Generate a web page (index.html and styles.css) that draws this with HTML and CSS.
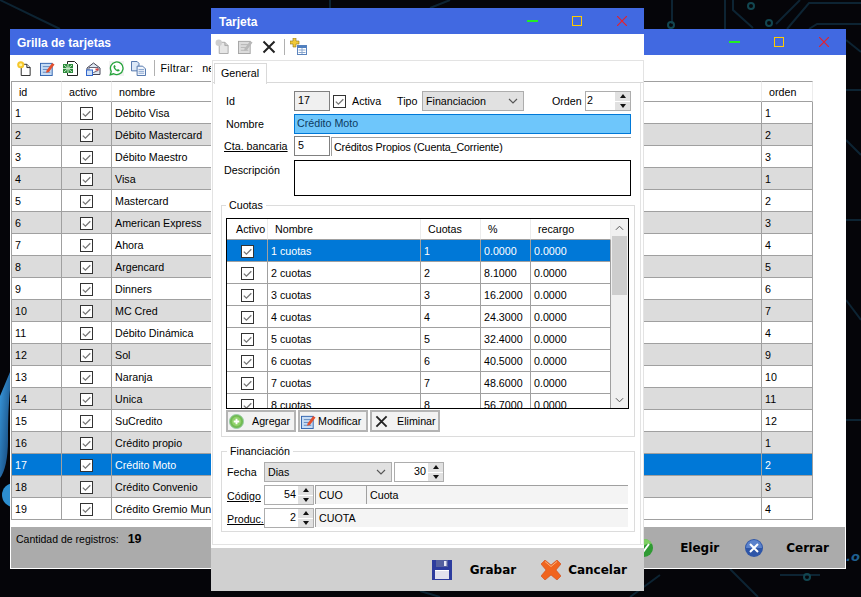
FILE: index.html
```html
<!DOCTYPE html>
<html lang="es">
<head>
    <meta charset="UTF-8">
    <title>Tarjetas</title>
    <link rel="stylesheet" href="styles.css">
</head>
<body>
    <!-- icon sheet -->
    <svg class="sheet" width="0" height="0">
        <defs>
            <linearGradient id="blob" x1="0" y1="0" x2="1" y2="1"><stop offset="0" stop-color="#3a9be0"/><stop offset="1" stop-color="#123f70"/></linearGradient>
        </defs>
        <symbol id="i-check" viewBox="0 0 13 13"><rect x=".5" y=".5" width="12" height="12" fill="#fff" stroke="#333"/><path d="M2.8 6.600l2.600 2.600 4.900-5" fill="none" stroke="#777" stroke-width="1.300"/></symbol>
        <symbol id="i-new" viewBox="0 0 16 16"><path d="M4.500 3.500h6l3.500 3.500v8.500H4.500z" fill="#fff" stroke="#222"/><path d="M10.500 3.500V7H14" fill="#ddd" stroke="#222"/><circle cx="4" cy="4" r="3.800" fill="#f6c72c"/><circle cx="4" cy="4" r="1.700" fill="#fff3a0"/></symbol>
        <symbol id="i-new-off" viewBox="0 0 16 16"><path d="M4.500 3.500h6l3.500 3.500v8.500H4.500z" fill="#e6e6e6" stroke="#a8a8a8"/><path d="M10.500 3.500V7H14" fill="#ccc" stroke="#a8a8a8"/><circle cx="4" cy="4" r="3.400" fill="#cfcfcf"/></symbol>
        <symbol id="i-edit" viewBox="0 0 16 16"><rect x=".5" y="2.500" width="12.500" height="13" fill="#c6dcf5" stroke="#2f62ae"/><path d="M3 6h8M3 9h6M3 12h8" stroke="#5f86bd"/><path d="M7 10l6-8 2.500 1.800-6 8-3 .7z" fill="#e2502e"/></symbol>
        <symbol id="i-edit-off" viewBox="0 0 16 16"><rect x=".5" y="2.500" width="12.500" height="13" fill="#dcdcdc" stroke="#a4a4a4"/><path d="M3 6h8M3 9h6M3 12h8" stroke="#b4b4b4"/><path d="M7 10l6-8 2.500 1.800-6 8-3 .7z" fill="#b8b8b8"/></symbol>
        <symbol id="i-excel" viewBox="0 0 17 17"><path d="M5.500 1.500h7l3 3v11h-10z" fill="#fff" stroke="#222"/><path d="M1 4h10v9H1z" fill="#2a8a3a"/><path d="M2 5l8 7M10 5l-8 7M1 8.500h10M6 4v9" stroke="#c8e8c8"/></symbol>
        <symbol id="i-mail" viewBox="0 0 15 15"><path d="M1 7l6.500-5L14 7v6.500H1z" fill="#dfe8f2" stroke="#445"/><path d="M3 6.500h9v3l-4.500 2-4.500-2z" fill="#fff" stroke="#667"/><rect x="9.500" y="7.500" width="3" height="2" fill="#d44"/><rect x=".5" y="9" width="6" height="5.500" fill="#cfe0f5" stroke="#36c"/></symbol>
        <symbol id="i-whatsapp" viewBox="0 0 16 16"><rect width="16" height="16" fill="#f2f2f2"/><path d="M1.400 14.600l1-3.600A6.700 6.700 0 1 1 5 13.600z" fill="#fff" stroke="#25a33a" stroke-width="1.400"/><path d="M5.300 4.800c-.9.8-.6 2.400.7 4 1.400 1.700 3.100 2.700 4.300 2.200.8-.3 1.200-1 1-1.500l-1.800-1-.8.800c-.9-.4-1.800-1.300-2.300-2.400l.7-.8-.8-1.900c-.4-.1-.7.2-1 .6z" fill="#25a33a"/></symbol>
        <symbol id="i-copy" viewBox="0 0 16 16"><path d="M.5 .5h6l2 2v8h-8z" fill="#dce8f7" stroke="#4a6fa8"/><path d="M6.500 5.500h6l3 3v7h-9z" fill="#f3f7fd" stroke="#4a6fa8"/><path d="M8 9h6M8 11h6M8 13h6" stroke="#7f9fcc"/></symbol>
        <symbol id="i-x" viewBox="0 0 14 14"><path d="M1.500 1.500l11 11M12.500 1.500l-11 11" stroke="#222" stroke-width="2" fill="none"/></symbol>
        <symbol id="i-addtable" viewBox="0 0 17 17"><path d="M3 0h3v3h3v3H6v3H3V6H0V3h3z" fill="#f0c93a" stroke="#8a7420" stroke-width=".6"/><rect x="7.500" y="7.500" width="9" height="9" fill="#fff" stroke="#5b84bd"/><rect x="7.500" y="7.500" width="9" height="2.500" fill="#4f7fc0"/><path d="M8.500 12h7M8.500 14.500h7M12 10v6" stroke="#8aa7cf"/></symbol>
        <symbol id="i-plus" viewBox="0 0 16 16"><circle cx="8" cy="8" r="7.500" fill="#72bb53" stroke="#9ca"/><circle cx="8" cy="8" r="5" fill="#8fd16a"/><path d="M5 8h6M8 5v6" stroke="#fff" stroke-width="2"/></symbol>
        <symbol id="i-floppy" viewBox="0 0 20 20"><path d="M0 0h20v20H0z" fill="#2d3c9e"/><rect x="4" y="0" width="12" height="7" fill="#55609f"/><rect x="12" y="1" width="2.500" height="5" fill="#e8e8f4"/><rect x="3" y="10" width="14" height="9" fill="#e2e2ee"/><path d="M3 10.500h14" stroke="#fff"/></symbol>
        <symbol id="i-cancel" viewBox="0 0 20 20"><path d="M4 0l6 5 6-5 4 4-5 6 5 6-4 4-6-5-6 5-4-4 5-6-5-6z" fill="#f0641e" stroke="#d24a16" stroke-width=".6"/><path d="M4 1.500l6 5 6-5" fill="none" stroke="#fbb27a"/></symbol>
        <symbol id="i-ok" viewBox="0 0 18 18"><circle cx="9" cy="9" r="9" fill="#2f9a33"/><path d="M0 9a9 9 0 0 1 9-9 9 9 0 0 1 8 5C12 4 6 7 2 15a9 9 0 0 1-2-6z" fill="#7ccf62"/><path d="M5 9l3 4 6-8" fill="none" stroke="#fff" stroke-width="2"/></symbol>
        <symbol id="i-close" viewBox="0 0 18 18"><circle cx="9" cy="9" r="9" fill="#2d55a8"/><path d="M1 9a8 8 0 0 1 16 0z" fill="#5b82cb"/><path d="M5 5l8 8M13 5l-8 8" stroke="#fff" stroke-width="2"/></symbol>
    </svg>

    <!-- wallpaper -->
    <svg class="wallpaper" viewBox="0 0 861 597">
        <g fill="none" stroke="#0d2433" stroke-width="2">
            <path d="M672 0v24M725 0v29M733 0v10l20 18M800 0l-24 24M861 3h-52l-22 26M861 24h-44l-8 5"/>
            <path d="M0 0l60 29M330 0v8M450 0l-20 8M846 40l15 12M846 90h15M846 140l15 15M846 220h15M846 300l15 20M846 420h15"/>
            <path d="M730 569l28 28M660 575l-30 22M780 575h40M420 591l20 6"/>
        </g>
        <g fill="none" stroke="#124650" stroke-width="2">
            <circle cx="671" cy="25" r="3"/><circle cx="751" cy="6" r="3"/><circle cx="769" cy="23" r="3"/><circle cx="807" cy="577" r="3"/>
        </g>
        <path d="M10 372L0 396v82c5-6 8-20 8-38 0-24 1-40 2-50z" fill="url(#blob)"/>
        <circle cx="14" cy="495" r="12" fill="#2d8fd0"/>
        <text x="846" y="561" class="wallpaper-text">.o</text>
    </svg>

    <section class="window window-list">
        <header class="titlebar">
            <h1 class="title">Grilla de tarjetas</h1>
            <div class="title-btns">
                <span class="btn-min"></span><span class="btn-max"></span>
                <svg class="btn-close" viewBox="0 0 10 10"><path d="M0 0l10 10M10 0L0 10"/></svg>
            </div>
        </header>
        <div class="toolbar list-toolbar">
            <svg class="ico ico-new"><use href="#i-new"/></svg>
            <svg class="ico"><use href="#i-edit"/></svg>
            <svg class="ico ico-lg"><use href="#i-excel"/></svg>
            <svg class="ico"><use href="#i-mail"/></svg>
            <svg class="ico"><use href="#i-whatsapp"/></svg>
            <svg class="ico"><use href="#i-copy"/></svg>
            <span class="sep"></span>
            <span class="filter">Filtrar:</span>
            <span class="filter-value">ne</span>
        </div>
        <table class="grid list-grid">
            <colgroup><col class="c-id"><col class="c-act"><col class="c-name"><col class="c-ord"></colgroup>
            <thead><tr><th>id</th><th>activo</th><th>nombre</th><th>orden</th></tr></thead>
            <tbody>
                <tr><td>1</td><td class="chk"><svg><use href="#i-check"/></svg></td><td>Débito Visa</td><td>1</td></tr>
                <tr class="alt"><td>2</td><td class="chk"><svg><use href="#i-check"/></svg></td><td>Débito Mastercard</td><td>2</td></tr>
                <tr><td>3</td><td class="chk"><svg><use href="#i-check"/></svg></td><td>Débito Maestro</td><td>3</td></tr>
                <tr class="alt"><td>4</td><td class="chk"><svg><use href="#i-check"/></svg></td><td>Visa</td><td>1</td></tr>
                <tr><td>5</td><td class="chk"><svg><use href="#i-check"/></svg></td><td>Mastercard</td><td>2</td></tr>
                <tr class="alt"><td>6</td><td class="chk"><svg><use href="#i-check"/></svg></td><td>American Express</td><td>3</td></tr>
                <tr><td>7</td><td class="chk"><svg><use href="#i-check"/></svg></td><td>Ahora</td><td>4</td></tr>
                <tr class="alt"><td>8</td><td class="chk"><svg><use href="#i-check"/></svg></td><td>Argencard</td><td>5</td></tr>
                <tr><td>9</td><td class="chk"><svg><use href="#i-check"/></svg></td><td>Dinners</td><td>6</td></tr>
                <tr class="alt"><td>10</td><td class="chk"><svg><use href="#i-check"/></svg></td><td>MC Cred</td><td>7</td></tr>
                <tr><td>11</td><td class="chk"><svg><use href="#i-check"/></svg></td><td>Débito Dinámica</td><td>4</td></tr>
                <tr class="alt"><td>12</td><td class="chk"><svg><use href="#i-check"/></svg></td><td>Sol</td><td>9</td></tr>
                <tr><td>13</td><td class="chk"><svg><use href="#i-check"/></svg></td><td>Naranja</td><td>10</td></tr>
                <tr class="alt"><td>14</td><td class="chk"><svg><use href="#i-check"/></svg></td><td>Unica</td><td>11</td></tr>
                <tr><td>15</td><td class="chk"><svg><use href="#i-check"/></svg></td><td>SuCredito</td><td>12</td></tr>
                <tr class="alt"><td>16</td><td class="chk"><svg><use href="#i-check"/></svg></td><td>Crédito propio</td><td>1</td></tr>
                <tr class="selected"><td>17</td><td class="chk"><svg><use href="#i-check"/></svg></td><td>Crédito Moto</td><td>2</td></tr>
                <tr class="alt"><td>18</td><td class="chk"><svg><use href="#i-check"/></svg></td><td>Crédito Convenio</td><td>3</td></tr>
                <tr><td>19</td><td class="chk"><svg><use href="#i-check"/></svg></td><td>Crédito Gremio Municipal</td><td>4</td></tr>
            </tbody>
        </table>
        <footer class="list-footer">
            <span class="count">Cantidad de registros: <b>19</b></span>
            <svg class="foot-ico ok-ico"><use href="#i-ok"/></svg>
            <span class="foot-btn elegir">Elegir</span>
            <svg class="foot-ico close-ico"><use href="#i-close"/></svg>
            <span class="foot-btn cerrar">Cerrar</span>
        </footer>
    </section>

    <section class="window window-card">
        <header class="titlebar">
            <h1 class="title">Tarjeta</h1>
            <div class="title-btns">
                <span class="btn-min"></span><span class="btn-max"></span>
                <svg class="btn-close" viewBox="0 0 10 10"><path d="M0 0l10 10M10 0L0 10"/></svg>
            </div>
        </header>
        <div class="toolbar card-toolbar">
            <svg class="ico"><use href="#i-new-off"/></svg>
            <svg class="ico"><use href="#i-edit-off"/></svg>
            <svg class="ico ico-x"><use href="#i-x"/></svg>
            <span class="sep"></span>
            <svg class="ico ico-lg"><use href="#i-addtable"/></svg>
        </div>

        <div class="tabs">
            <div class="tab-strip"><span class="tab">General</span></div>
            <div class="pane">
                <div class="row row-first">
                    <label class="lbl lbl-id">Id</label>
                    <span class="field field-num readonly">17</span>
                    <svg class="check-box"><use href="#i-check"/></svg>
                    <span class="activa">Activa</span>
                    <span class="tipo">Tipo</span>
                    <span class="select select-tipo">Financiacion<svg viewBox="0 0 10 6"><path d="M1 1l4 4 4-4"/></svg></span>
                    <span class="orden">Orden</span>
                    <span class="spin spin-orden"><span class="spin-val left">2</span><span class="spin-btns"><i class="up"></i><i class="down"></i></span></span>
                </div>
                <div class="row row-name">
                    <label class="lbl lbl-name">Nombre</label>
                    <span class="field field-wide focus">Crédito Moto</span>
                </div>
                <div class="row row-bank">
                    <label class="lbl link">Cta. bancaria</label>
                    <span class="field field-num">5</span>
                    <span class="display display-bank">Créditos Propios (Cuenta_Corriente)</span>
                </div>
                <div class="row row-desc">
                    <label class="lbl">Descripción</label>
                    <span class="field field-wide textarea"></span>
                </div>

                <fieldset class="group group-cuotas">
                    <legend>Cuotas</legend>
                    <div class="sub-grid">
                        <div class="sub-scroll">
                            <table class="grid">
                                <colgroup><col class="s-act"><col class="s-name"><col class="s-cuo"><col class="s-pct"><col class="s-rec"></colgroup>
                                <thead><tr><th class="th-act">Activo</th><th>Nombre</th><th>Cuotas</th><th>%</th><th>recargo</th></tr></thead>
                                <tbody>
                                    <tr class="selected"><td class="chk"><svg><use href="#i-check"/></svg></td><td>1 cuotas</td><td>1</td><td>0.0000</td><td>0.0000</td></tr>
                                    <tr><td class="chk"><svg><use href="#i-check"/></svg></td><td>2 cuotas</td><td>2</td><td>8.1000</td><td>0.0000</td></tr>
                                    <tr><td class="chk"><svg><use href="#i-check"/></svg></td><td>3 cuotas</td><td>3</td><td>16.2000</td><td>0.0000</td></tr>
                                    <tr><td class="chk"><svg><use href="#i-check"/></svg></td><td>4 cuotas</td><td>4</td><td>24.3000</td><td>0.0000</td></tr>
                                    <tr><td class="chk"><svg><use href="#i-check"/></svg></td><td>5 cuotas</td><td>5</td><td>32.4000</td><td>0.0000</td></tr>
                                    <tr><td class="chk"><svg><use href="#i-check"/></svg></td><td>6 cuotas</td><td>6</td><td>40.5000</td><td>0.0000</td></tr>
                                    <tr><td class="chk"><svg><use href="#i-check"/></svg></td><td>7 cuotas</td><td>7</td><td>48.6000</td><td>0.0000</td></tr>
                                    <tr><td class="chk"><svg><use href="#i-check"/></svg></td><td>8 cuotas</td><td>8</td><td>56.7000</td><td>0.0000</td></tr>
                                </tbody>
                            </table>
                        </div>
                        <div class="scrollbar">
                            <svg viewBox="0 0 10 6"><path d="M1 5l4-4 4 4"/></svg>
                            <span class="thumb"></span>
                            <svg viewBox="0 0 10 6"><path d="M1 1l4 4 4-4"/></svg>
                        </div>
                    </div>
                    <div class="actions">
                        <span class="action"><svg class="a-plus"><use href="#i-plus"/></svg>Agregar</span>
                        <span class="action"><svg class="a-edit"><use href="#i-edit"/></svg>Modificar</span>
                        <span class="action"><svg class="a-x"><use href="#i-x"/></svg>Eliminar</span>
                    </div>
                </fieldset>

                <fieldset class="group group-fin">
                    <legend>Financiación</legend>
                    <div class="fin-row">
                        <label class="lbl-fin">Fecha</label>
                        <span class="select select-fecha">Dias<svg viewBox="0 0 10 6"><path d="M1 1l4 4 4-4"/></svg></span>
                        <span class="spin spin-dias"><span class="spin-val">30</span><span class="spin-btns"><i class="up"></i><i class="down"></i></span></span>
                    </div>
                    <div class="fin-row">
                        <label class="lbl-fin link">Código</label>
                        <span class="spin"><span class="spin-val">54</span><span class="spin-btns"><i class="up"></i><i class="down"></i></span></span>
                        <span class="display display-code">CUO</span>
                        <span class="display display-grow">Cuota</span>
                    </div>
                    <div class="fin-row">
                        <label class="lbl-fin link">Produc.</label>
                        <span class="spin"><span class="spin-val">2</span><span class="spin-btns"><i class="up"></i><i class="down"></i></span></span>
                        <span class="display display-grow">CUOTA</span>
                    </div>
                </fieldset>
            </div>
        </div>

        <footer class="card-footer">
            <svg class="foot-ico"><use href="#i-floppy"/></svg>
            <span class="foot-btn grabar">Grabar</span>
            <svg class="foot-ico cancel-ico"><use href="#i-cancel"/></svg>
            <span class="foot-btn cancelar">Cancelar</span>
        </footer>
    </section>
</body>
</html>
```

FILE: styles.css
```css
* {
    box-sizing: border-box;
}
html, body {
    height: 100%;
}
body {
    margin: 0;
    background: #050509;
    overflow: hidden;
    font: 10.7px/14px "Liberation Sans", Arial, sans-serif;
    color: #000;
}
.sheet {
    position: absolute;
}
.wallpaper {
    position: absolute;
    left: 0;
    top: 0;
    width: 861px;
    height: 597px;
}
.wallpaper-text {
    fill: #1f5f8f;
    font: italic bold 13px "DejaVu Sans", sans-serif;
}

/* windows */
.window {
    position: absolute;
    display: flex;
    flex-direction: column;
    background: #fff;
}
.window-list {
    left: 10px;
    top: 29px;
    width: 836px;
    height: 540px;
}
.window-card {
    left: 211px;
    top: 8px;
    width: 433px;
    height: 583px;
}
.titlebar {
    flex: none;
    height: 26px;
    display: flex;
    align-items: center;
    background: #4169e1;
    color: #fff;
}
.title {
    margin: 2px 0 0 7px;
    font-size: 12px;
    font-weight: bold;
}
.window-card .title {
    margin-left: 8px;
}
.title-btns {
    margin-left: auto;
    display: flex;
    align-items: center;
    padding-right: 17px;
}
.btn-min {
    width: 11px;
    height: 2px;
    background: #22ee22;
}
.btn-max {
    width: 10px;
    height: 10px;
    margin-left: 34px;
    border: 1px solid #ffcc00;
}
.btn-close {
    width: 10px;
    height: 10px;
    margin-left: 35px;
}
.btn-close path {
    stroke: #e8202a;
    stroke-width: 1.2;
    fill: none;
}

/* toolbars */
.toolbar {
    flex: none;
    display: flex;
    align-items: center;
    background: #fff;
}
.list-toolbar {
    height: 26px;
    padding-left: 7px;
}
.card-toolbar {
    height: 25px;
    padding-left: 4px;
}
.ico {
    flex: none;
    width: 15px;
    height: 15px;
    margin-right: 7.5px;
}
.ico-lg {
    width: 17px;
    height: 17px;
    margin-right: 7px;
}
.ico-x {
    width: 14px;
    height: 14px;
    margin-left: 2px;
}
.sep {
    width: 1px;
    height: 16px;
    background: #b0b0b0;
}
.list-toolbar .sep {
    margin-right: 6px;
}
.card-toolbar .sep {
    margin-right: 5px;
}
.filter {
    letter-spacing: .3px;
}
.filter-value {
    margin-left: 9px;
}

/* grids */
.grid {
    table-layout: fixed;
    border-collapse: separate;
    border-spacing: 0;
}
.grid th {
    height: 21px;
    padding: 0 0 0 7px;
    font-weight: normal;
    text-align: left;
    border-right: 1px solid #ececec;
    border-bottom: 1px solid #a0a0a0;
}
.grid td {
    height: 22px;
    padding: 0 0 0 3px;
    white-space: nowrap;
    overflow: hidden;
    border-right: 1px solid #a0a0a0;
    border-bottom: 1px solid #a0a0a0;
}
.grid td.chk {
    padding: 0;
    text-align: center;
}
.chk svg {
    display: block;
    width: 13px;
    height: 13px;
    margin: 1px auto 0;
}
.alt td {
    background: #dcdcdc;
}
.selected td {
    background: #0078d7;
    color: #fff;
}
.list-grid {
    width: 802px;
    margin-left: 1px;
}
.list-grid thead th {
    border-top: 1px solid #a0a0a0;
    height: 21px;
}
.list-grid th:first-child,
.list-grid td:first-child {
    border-left: 1px solid #a0a0a0;
}
.c-id { width: 51px; }
.c-act { width: 50px; }
.c-name { width: 650px; }
.c-ord { width: 51px; }

.list-footer {
    margin: auto 0 0;
    height: 43px;
    display: flex;
    align-items: center;
    background: #ababab;
    border: 1px solid #fff;
    padding: 0 16px 0 5px;
}
.count {
    align-self: flex-start;
    margin-top: 5px;
    margin-right: auto;
    font-size: 10.5px;
}
.count b {
    margin-left: 6px;
    font-size: 12.5px;
}
.foot-ico {
    width: 18px;
    height: 18px;
    flex: none;
}
.foot-btn {
    font: bold 12px/16px "DejaVu Sans", sans-serif;
}
.elegir {
    margin-left: 27px;
}
.close-ico {
    margin-left: 26px;
}
.cerrar {
    margin-left: 23px;
}

/* card form */
.tabs {
    flex: 1;
    min-height: 0;
    margin: 1px 0 3px 1px;
    border: 1px solid #e3e3e3;
    display: flex;
    flex-direction: column;
}
.tab-strip {
    flex: none;
    height: 22px;
    padding: 2px 0 0 1px;
    border-bottom: 1px solid #d9d9d9;
}
.tab {
    display: block;
    width: 53px;
    height: 21px;
    padding: 2px 0 0 6px;
    border: 1px solid #d9d9d9;
    border-bottom: 0;
    background: #fff;
}
.pane {
    flex: 1;
    width: 428px;
    border-right: 1px solid #e3e3e3;
    padding-top: 8px;
}
.row {
    display: flex;
    height: 20px;
    align-items: center;
    padding-left: 11px;
}
.row-name {
    margin-top: 3px;
}
.row-bank {
    margin-top: 2px;
}
.row-desc {
    height: 36px;
    margin-top: 4px;
    align-items: flex-start;
}
.row-desc .lbl {
    margin-top: 3px;
}
.lbl {
    flex: none;
    width: 70px;
}
.lbl-id, .lbl-name {
    padding-left: 2px;
}
.link {
    text-decoration: underline;
}
.field {
    display: block;
    height: 20px;
    line-height: 17px;
    padding-left: 3px;
    border: 1px solid #808080;
    background: #fff;
}
.field-num {
    width: 36px;
}
.readonly {
    background: #f0f0f0;
}
.field-wide {
    width: 337px;
}
.focus {
    border-color: #0078d7;
    background: #6ec6fb;
    color: #0d3a5f;
    padding-left: 2px;
}
.textarea {
    height: 36px;
    border-color: #000;
}
.check-box {
    flex: none;
    width: 13px;
    height: 13px;
    margin-left: 3px;
}
.activa {
    margin-left: 6px;
    width: 45px;
}
.tipo {
    width: 25px;
}
.select {
    display: flex;
    align-items: center;
    justify-content: space-between;
    height: 20px;
    padding: 0 5px 0 3px;
    background: #e1e1e1;
    border: 1px solid #adadad;
}
.select svg {
    width: 10px;
    height: 6px;
}
.select path, .scrollbar path {
    fill: none;
    stroke: #555;
    stroke-width: 1.1;
}
.select-tipo {
    width: 102px;
}
.orden {
    margin-left: 28px;
    width: 33px;
}
.spin {
    flex: none;
    display: flex;
    width: 50px;
    height: 20px;
    border: 1px solid #adadad;
    background: #fff;
}
.spin-orden {
    width: 46px;
}
.spin-val {
    flex: 1;
    text-align: right;
    padding-right: 2px;
    line-height: 16px;
}
.spin-val.left {
    text-align: left;
    padding-left: 1px;
}
.spin-btns {
    flex: none;
    width: 15px;
    display: flex;
    flex-direction: column;
    gap: 1px;
}
.spin-btns i {
    flex: 1;
    background: #e1e1e1;
    display: flex;
    align-items: center;
    justify-content: center;
}
.spin-btns i::after {
    content: "";
    border-left: 3.5px solid transparent;
    border-right: 3.5px solid transparent;
}
.up::after {
    border-bottom: 4px solid #111;
}
.down::after {
    border-top: 4px solid #111;
}
.display {
    display: block;
    height: 19px;
    line-height: 19px;
    padding-left: 3px;
    border-top: 1px solid #a0a0a0;
    border-left: 1px solid #a0a0a0;
    background: #f4f4f4;
}
.display-bank {
    width: 300px;
    margin-left: 1px;
    padding-left: 2px;
    background: #fff;
    letter-spacing: -.14px;
}

.group {
    margin: 2px 5px 0 8px;
    padding: 6px 5px 0 4px;
    border: 1px solid #dcdcdc;
    min-width: 0;
}
.group legend {
    padding: 0 3px;
    line-height: 14px;
}
.group-cuotas {
    height: 239px;
}
.sub-grid {
    display: flex;
    width: 403px;
    height: 191px;
    border: 1px solid #000;
}
.sub-scroll {
    flex: none;
    width: 384px;
    overflow: hidden;
}
.sub-scroll .grid {
    width: 384px;
}
.s-act { width: 41px; }
.s-name { width: 153px; }
.s-cuo { width: 60px; }
.s-pct { width: 50px; }
.s-rec { width: 80px; }
.grid .th-act {
    padding-left: 9px;
}
.scrollbar {
    flex: none;
    width: 17px;
    background: #f0f0f0;
    display: flex;
    flex-direction: column;
    align-items: center;
}
.scrollbar svg {
    flex: none;
    width: 9px;
    height: 6px;
    margin: 6px 0 5px;
}
.thumb {
    width: 15px;
    height: 59px;
    background: #cdcdcd;
    margin-bottom: auto;
}
.actions {
    display: flex;
    gap: 2px;
    margin-top: 1px;
}
.action {
    width: 70px;
    height: 22px;
    display: flex;
    align-items: center;
    padding-left: 1px;
    border: 2px solid #b4b4b4;
    background: #f2f2f2;
    white-space: nowrap;
}
.action svg {
    flex: none;
    width: 15px;
    height: 15px;
}
.action .a-plus {
    margin-right: 8px;
}
.action .a-edit {
    margin-right: 2px;
}
.action .a-x {
    width: 13px;
    height: 13px;
    margin: 0 9px 0 2px;
}
.group-fin {
    height: 88px;
    margin-top: 7px;
    padding: 4px 5px 0 4px;
}
.group-fin legend {
    margin-left: 1px;
}
.fin-row {
    display: flex;
    height: 20px;
    margin-bottom: 3px;
    width: 402px;
}
.lbl-fin {
    flex: none;
    width: 38px;
    padding: 3px 0 0 1px;
}
.lbl-fin.link {
    padding-top: 4px;
}
.select-fecha {
    width: 128px;
    margin-right: 2px;
}
.fin-row .display {
    margin-left: 1px;
}
.display-code {
    width: 51px;
}
.fin-row .display-code + .display {
    margin-left: 0;
}
.display-grow {
    flex: 1;
}

.card-footer {
    flex: none;
    height: 43px;
    display: flex;
    align-items: center;
    justify-content: flex-end;
    padding-right: 17px;
    background: #d0d0d0;
}
.card-footer .foot-ico {
    width: 20px;
    height: 20px;
}
.card-footer .foot-btn {
    padding-top: 1px;
}
.grabar {
    margin-left: 18px;
}
.cancel-ico {
    margin-left: 25px;
}
.cancelar {
    margin-left: 7px;
}
```
